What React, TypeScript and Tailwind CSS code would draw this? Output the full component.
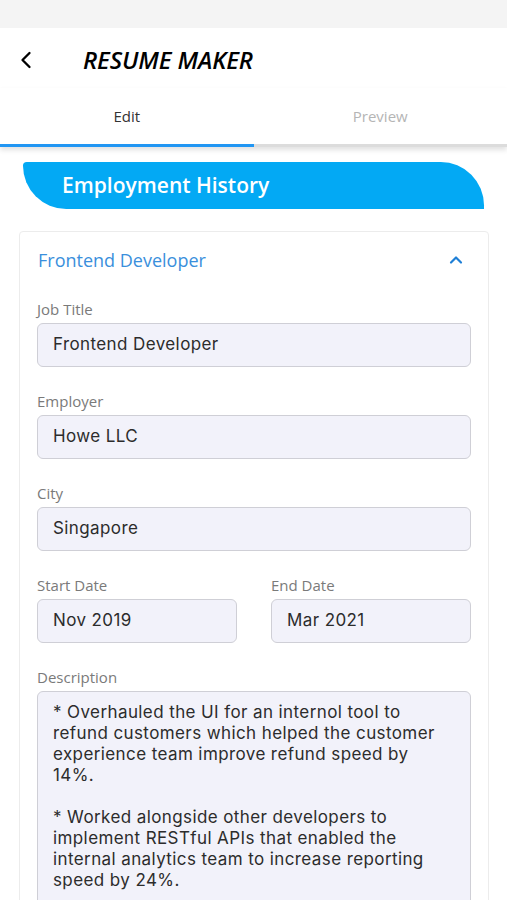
import { ChevronLeft, ChevronUp } from "lucide-react";

const fieldLabel = "text-[15px] text-[#7a7a7a] leading-[20px] mb-[4px] font-['Open_Sans',sans-serif]";
const fieldBox =
  "h-[44px] rounded-[6px] border border-[#cfcfd6] bg-[#f2f2fa] px-[15px] flex items-center text-[17px] tracking-[0.4px] text-[#2c2c2c]";

function Field({ label, value }: { label: string; value: string }) {
  return (
    <div>
      <div className={fieldLabel}>{label}</div>
      <div className={fieldBox}>{value}</div>
    </div>
  );
}

const descLines = [
  "* Overhauled the UI for an internol tool to",
  "refund customers which helped the customer",
  "experience team improve refund speed by",
  "14%.",
  "",
  "* Worked alongside other developers to",
  "implement RESTful APIs that enabled the",
  "internal analytics team to increase reporting",
  "speed by 24%.",
];

export default function App() {
  return (
    <div className="w-[507px] h-[900px] overflow-hidden bg-white font-['Inter',sans-serif]">
      <div className="h-[28px] bg-[#f4f4f4]" />

      <header className="h-[60px] pt-[4px] flex items-center">
        <ChevronLeft className="ml-[12px] w-[28px] h-[28px] text-black" strokeWidth={2} />
        <h1 className="ml-[43px] text-[24px] italic font-semibold tracking-[-0.1px] text-black font-['Open_Sans',sans-serif]">
          RESUME MAKER
        </h1>
      </header>

      <nav className="relative shadow-[0_3px_5px_rgba(0,0,0,0.12)]">
        <div className="flex h-[56px] items-center font-['Open_Sans',sans-serif] text-[15px]">
          <div className="flex-1 text-center text-[#333]">Edit</div>
          <div className="flex-1 text-center text-[#b5b5b5]">Preview</div>
        </div>
        <div className="flex h-[3px]">
          <div className="flex-1 bg-[#2196f3]" />
          <div className="flex-1 bg-[#dcdcdc]" />
        </div>
      </nav>

      <div className="pl-[23px] pt-[15px]">
        <div className="h-[47px] w-[461px] bg-[#03a9f4] rounded-tl-[4px] rounded-bl-[46px] rounded-tr-[46px] flex items-center pl-[39px]">
          <span className="text-white text-[21px] font-semibold font-['Open_Sans',sans-serif]">
            Employment History
          </span>
        </div>
      </div>

      <section className="mx-[19px] mt-[22px] w-[470px] h-[700px] border border-[#ececec] rounded-[4px] px-[17px]">
        <div className="h-[56px] flex items-center justify-between">
          <span className="ml-px text-[18px] text-[#3a8fdc] font-['Open_Sans',sans-serif]">Frontend Developer</span>
          <ChevronUp className="w-[20px] h-[20px] text-[#1e7fd6] mr-[5px]" strokeWidth={2.6} />
        </div>

        <div className="pt-[11px] flex flex-col gap-[24px]">
          <Field label="Job Title" value="Frontend Developer" />
          <Field label="Employer" value="Howe LLC" />
          <Field label="City" value="Singapore" />
          <div className="grid grid-cols-2 gap-[34px]">
            <Field label="Start Date" value="Nov 2019" />
            <Field label="End Date" value="Mar 2021" />
          </div>
          <div>
            <div className={fieldLabel}>Description</div>
            <div className="h-[260px] rounded-[6px] border border-[#cfcfd6] bg-[#f2f2fa] px-[15px] pt-[10px] text-[17px] leading-[21px] tracking-[0.4px] text-[#2c2c2c]">
              {descLines.map((l, i) => (
                <div key={i} className="h-[21px] whitespace-nowrap">
                  {l}
                </div>
              ))}
            </div>
          </div>
        </div>
      </section>
    </div>
  );
}
